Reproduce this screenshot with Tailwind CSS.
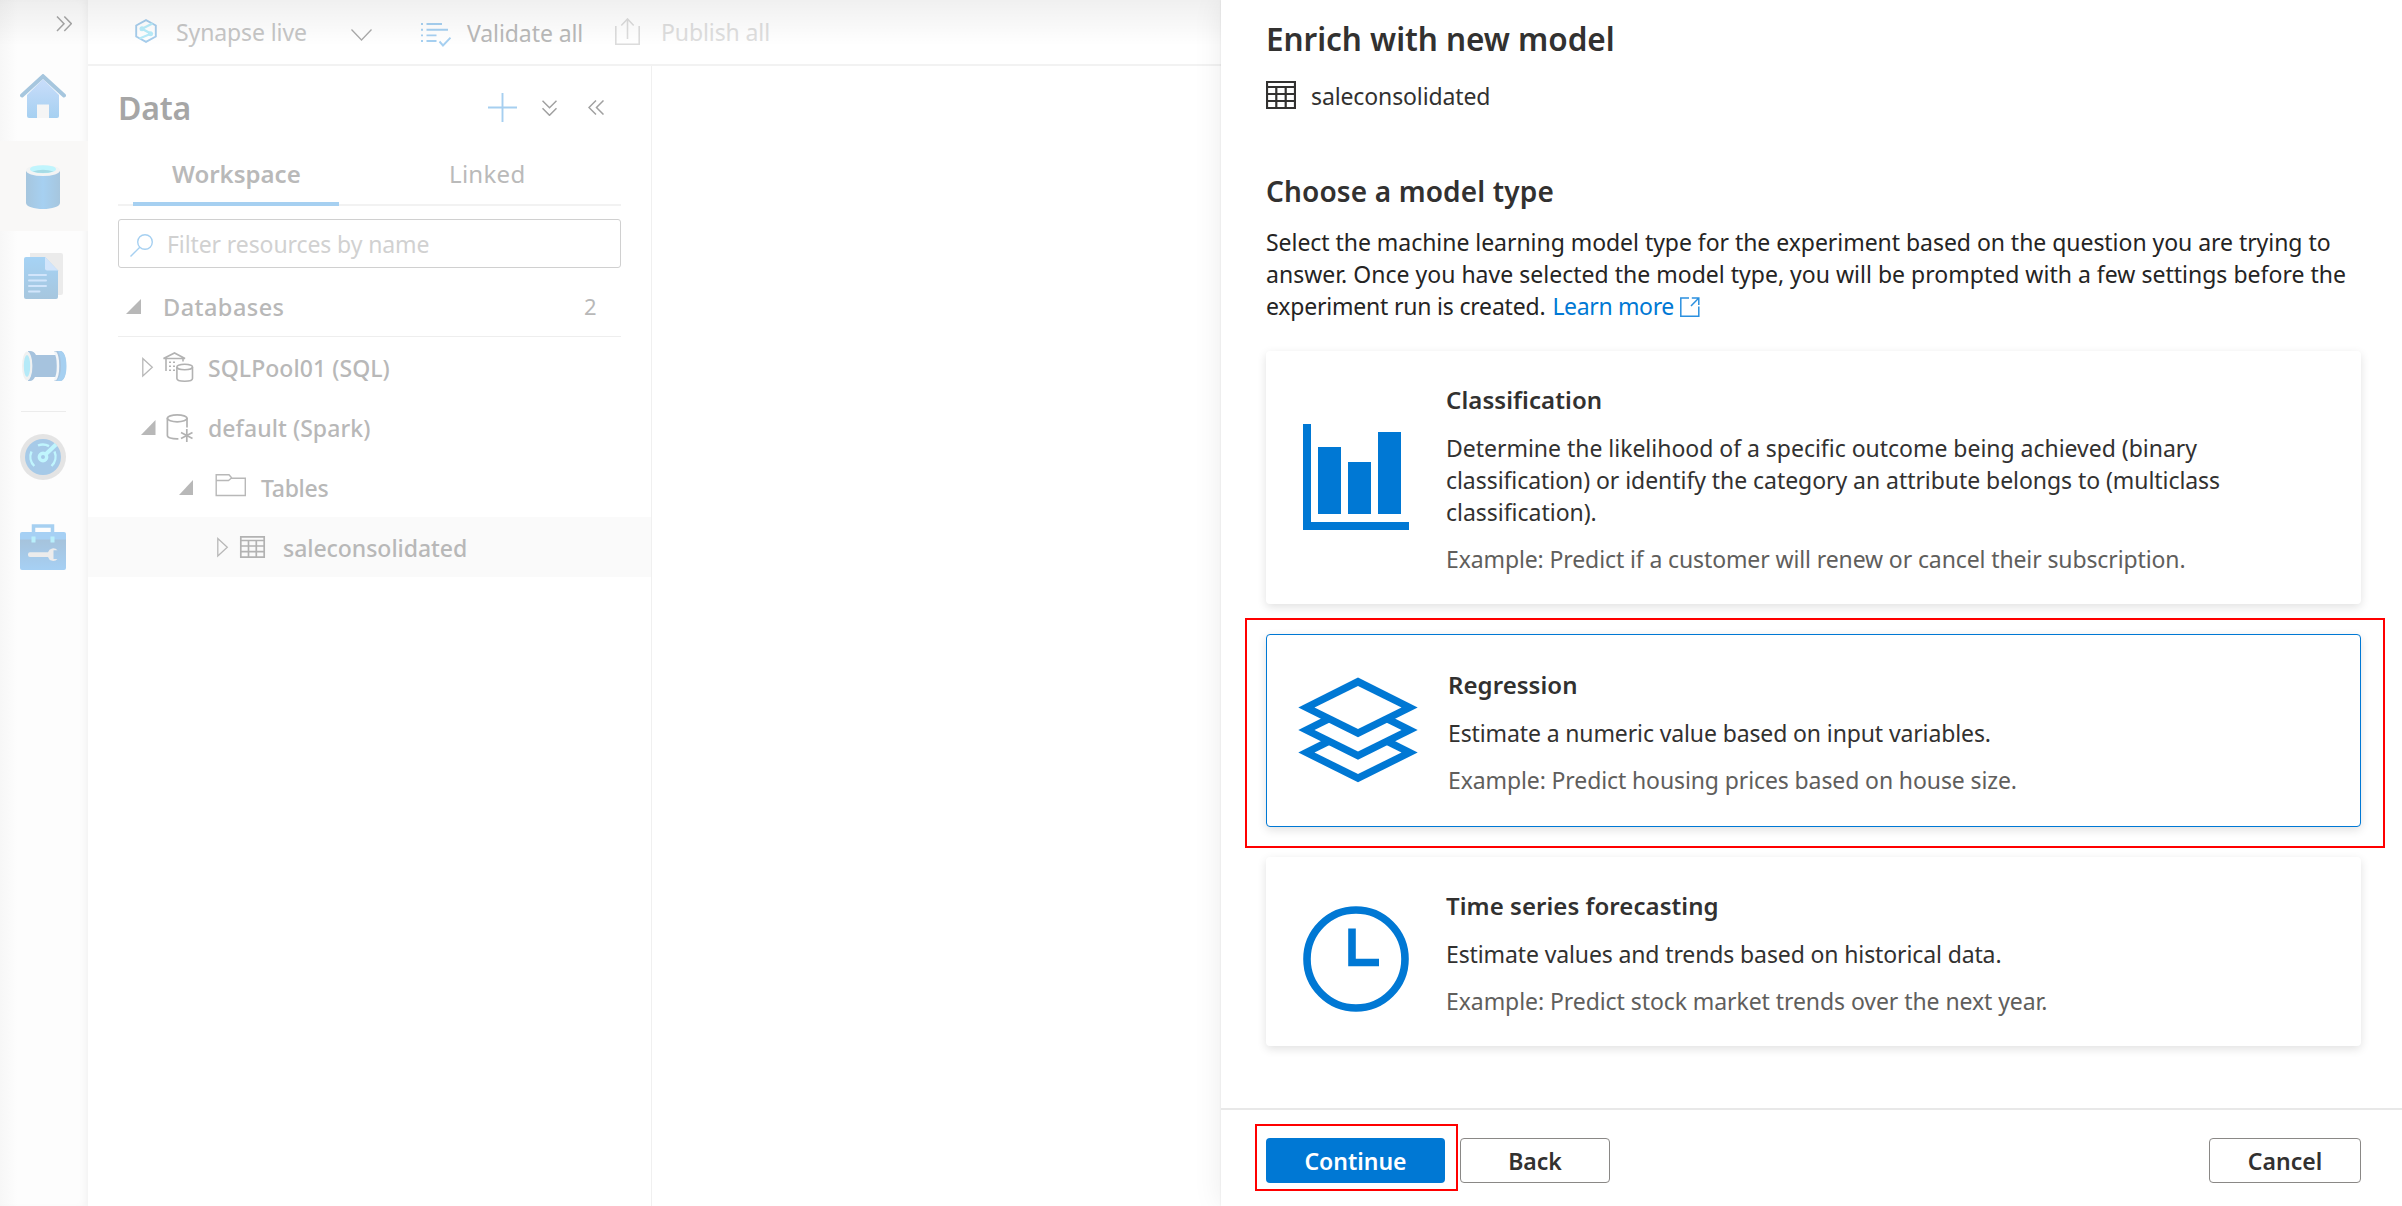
<!DOCTYPE html>
<html lang="en">
<head>
<meta charset="utf-8">
<title>Synapse Studio - Enrich with new model</title>
<script src="https://cdn.jsdelivr.net/npm/@tailwindcss/browser@4"></script>
</head>
<body class="relative flex h-[1206px] w-[2402px] overflow-hidden bg-white font-['Noto_Sans','Open_Sans',sans-serif] text-[23px] leading-8 text-[#323130]">

<!-- Navigation rail -->
<nav class="flex h-full w-[88px] shrink-0 flex-col bg-linear-to-r from-[#f7f7f7] via-[#fdfdfd] via-20% to-[#fdfdfd] shadow-[inset_-6px_0_8px_-4px_rgba(0,0,0,0.05)]">
  <div class="flex h-[51px] justify-end pt-4 pr-4">
    <svg class="h-4 w-4" viewBox="0 0 16 16" fill="none" stroke="#a6a6a6" stroke-width="1.5"><path d="M1 .5 8 7.7 1 15M8.3.5l7 7.2-7 7.3"/></svg>
  </div>
  <a class="flex h-[90px] justify-center pt-[23px] pr-0.5">
    <svg class="h-11 w-[46px]" viewBox="0 0 46 44"><defs><linearGradient id="hm" x1="0" y1="0" x2="0" y2="1"><stop offset="0" stop-color="#c9ddfa"/><stop offset="1" stop-color="#a6d0f1"/></linearGradient></defs><path d="M7 21 23 5l16 16v21q0 2-2 2H9q-2 0-2-2z" fill="url(#hm)"/><path d="M17 30.500h12V44H17z" fill="#f5f5f5"/><path d="M2 21.500 23 2.300l21 19.200" fill="none" stroke="#a6c6de" stroke-width="4" stroke-linecap="round"/></svg>
  </a>
  <a class="flex h-[90px] justify-center bg-[#f9f8f7] pt-6 pr-0.5">
    <svg class="h-11 w-[34px]" viewBox="0 0 34 44"><defs><linearGradient id="db"><stop offset="0" stop-color="#a6c6de"/><stop offset=".5" stop-color="#a6d0f1"/><stop offset="1" stop-color="#a6c6de"/></linearGradient></defs><path d="M0 6v32c0 3.500 8 6 17 6s17-2.500 17-6V6z" fill="url(#db)"/><ellipse cx="17" cy="5.500" rx="17" ry="5.500" fill="#f3f4f4"/><ellipse cx="17" cy="4.200" rx="13" ry="4" fill="#c0f5fd"/><path d="M6.500 6.500q10.500-3.500 21 0Q17 9.700 6.500 6.500z" fill="#a6dbe5"/></svg>
  </a>
  <a class="flex h-[90px] justify-center pt-[22px] pr-0.5">
    <svg class="h-[46px] w-[39px]" viewBox="0 0 39 46"><path d="M6 0h31q2 0 2 2v38q0 2-2 2H6z" fill="#ebebeb"/><defs><linearGradient id="dc" x1="0" y1="0" x2="0" y2="1"><stop offset="0" stop-color="#a6d3f5"/><stop offset="1" stop-color="#a6c6de"/></linearGradient></defs><path d="M2 4h19l13 13.500V44q0 2-2 2H2q-2 0-2-2V6q0-2 2-2z" fill="url(#dc)"/><path d="M21 4v11.500q0 2 2 2h11z" fill="#d2e5fb"/><path d="M5 22h17M5 27.500h17M5 33h17M5 38.500h10.500" stroke="#d2e5fb" stroke-width="2" stroke-linecap="round"/></svg>
  </a>
  <a class="flex h-[90px] justify-center pt-[30px]">
    <svg class="h-[30px] w-[45px]" viewBox="0 0 45 30"><path d="M6 0h2q4 0 6 4h21q-1-3-3-4h6c4 0 6 6 6 15s-2 15-6 15h-6q2-1 3-4H13q-2 4-5 4H6z" fill="#a6c3de"/><path d="M36 0h2c4.500 0 6.500 7 6.500 15S42.500 30 38 30h-3c3-4 4-9 4-15s-1-11-3-15z" fill="#a6d0f1"/><path d="M33 1c4 5 4 23 0 28" fill="none" stroke="#f2f5f8" stroke-width="2.500"/><ellipse cx="5.200" cy="15" rx="5.200" ry="14.500" fill="#f0f1f1"/><ellipse cx="5" cy="15" rx="3.200" ry="11" fill="#b5eaf8"/></svg>
  </a>
  <div class="mr-[22px] ml-[21px] h-px bg-[#ececec]"></div>
  <a class="flex h-[90px] justify-center pt-[22px] pr-0.5">
    <svg class="h-[46px] w-[46px]" viewBox="0 0 46 46"><circle cx="23" cy="23" r="23" fill="#e4e4e4"/><circle cx="23" cy="23" r="18" fill="#a6cae8"/><g fill="none" stroke="#c0f5fd" stroke-width="2.400"><path d="M18 11.500a13 13 0 0 1 11 .6M11.500 17.500a13 13 0 0 0 2.800 14.500M34.500 17.500a13 13 0 0 1-3 14.500"/><path d="M26 20 36 10.500" stroke-width="4"/><circle cx="23" cy="23" r="3.700" stroke-width="3.400"/></g></svg>
  </a>
  <a class="flex h-[90px] justify-center pt-[22px] pr-0.5">
    <svg class="h-[46px] w-[46px]" viewBox="0 0 46 46"><defs><linearGradient id="tb" x1="0" y1="0" x2="0" y2="1"><stop offset="0" stop-color="#a6c3dc"/><stop offset="1" stop-color="#a6d0f4"/></linearGradient></defs><path d="M13.500 9V2h19v7" fill="none" stroke="#a6d0f1" stroke-width="3.500"/><path d="M2 8h42q2 0 2 2v6H0v-6q0-2 2-2z" fill="#a6d0f4"/><path d="M0 15.500h46V44q0 2-2 2H2q-2 0-2-2z" fill="url(#tb)"/><path d="M11.500 12.500h4v6h-4zM30.500 12.500h4v6h-4z" fill="#b9effb"/><path d="M10 28.300h18a5.500 5.500 0 0 1 9.500-2h-4v8.700h4a5.500 5.500 0 0 1-9.500-2H10a2 2 0 0 1-2-2v-.7q0-2 2-2z" fill="#ececec"/></svg>
  </a>
</nav>

<main class="flex h-full w-[1133px] shrink-0 flex-col">
  <!-- Toolbar -->
  <header class="flex h-[66px] items-center border-b-2 border-[#f2f2f2] pl-[47px]">
    <svg class="mt-[-3px] h-6 w-[22px]" viewBox="0 0 22 24" fill="none"><path d="M11 1.200 20.800 6.500v11L11 22.800 1.200 17.500v-11z" stroke="#a6cdec" stroke-width="1.900"/><path d="M17.500 4.500 7 9.700l9 5L4.500 19.500" stroke="#b8ecfa" stroke-width="2.300"/><circle cx="7" cy="9.700" r="2.500" fill="#b8ecfa"/><circle cx="15.500" cy="14.700" r="2.500" fill="#b8ecfa"/></svg>
    <span class="ml-[19px] w-[175px] tracking-[-0.1px] text-[#c6c6c6]">Synapse live</span>
    <svg class="mt-1.5 h-3 w-[21px]" viewBox="0 0 21 12" fill="none" stroke="#aaa" stroke-width="1.300"><path d="M.5.500 10.500 11 20.500.500"/></svg>
    <svg class="mt-1 ml-[49px] h-[26px] w-[30px]" viewBox="0 0 30 26" fill="none" stroke="#a6d0f1" stroke-width="1.900"><path d="M0 3h2M0 8.700h2M0 14.400h2M0 20h2M5.500 3H21M5.500 8.700H27M5.500 14.400H15.500M5.500 20H15.500M18.500 20.500l3.500 4 7.500-7.800"/></svg>
    <span class="mt-0.5 ml-4 w-[148px] tracking-[-0.08px] text-[#b9b9b9]">Validate all</span>
    <svg class="mt-[-1px] h-[27px] w-[25px]" viewBox="0 0 25 27" fill="none" stroke="#dcdcdc" stroke-width="1.600"><path d="M.8 8v18.200h23.400V8M12.500 21V1M6.300 7.500l6.200-6.500 6.200 6.500"/></svg>
    <span class="ml-[21px] tracking-[-0.1px] text-[#dedede]">Publish all</span>
  </header>

  <!-- Data pane -->
  <section class="flex w-[564px] grow flex-col border-r border-[#f0f0f0] pt-[19px]">
    <div class="flex h-11 items-center pl-[30px]">
      <h1 class="w-[370px] pt-px text-[32px] leading-[44px] font-semibold tracking-[-0.2px] text-[#a6a6a6]">Data</h1>
      <svg class="h-[29px] w-[29px]" viewBox="0 0 29 29" fill="none" stroke="#a6cff0" stroke-width="1.900"><path d="M14.500 0v29M0 14.500h29"/></svg>
      <svg class="mt-0.5 ml-[25px] h-4 w-[15px]" viewBox="0 0 15 16" fill="none" stroke="#a0a0a0" stroke-width="1.500"><path d="m.5.800 7 7 7-7M.5 8.300l7 7 7-7"/></svg>
      <svg class="mt-px ml-[31px] h-[15px] w-4" viewBox="0 0 16 15" fill="none" stroke="#a0a0a0" stroke-width="1.500"><path d="m8 .5-7 7 7 7M15.500.500l-7 7 7 7"/></svg>
    </div>
    <div class="mx-[30px] mt-[29px] flex h-12 w-[503px] border-b-2 border-[#f2f2f2] pl-[15px] text-2xl leading-8">
      <div class="h-12 w-[206px] border-b-4 border-[#a6d0f1] pl-[39px] font-semibold text-[#b9b9b9]">Workspace</div>
      <div class="pl-[110px] tracking-[0.3px] text-[#bababa]">Linked</div>
    </div>
    <div class="mx-[30px] mt-[13px] flex h-[49px] w-[503px] items-center rounded-[3px] border border-[#d0d0d0] pl-[11px]">
      <svg class="mt-[3px] h-[23px] w-[23px]" viewBox="0 0 23 23" fill="none" stroke="#a6d0f1" stroke-width="1.400"><circle cx="15" cy="8" r="7.300"/><path d="M9.800 13.200.5 22.500"/></svg>
      <span class="ml-[14px] tracking-[-0.1px] text-[#d1d1d1]">Filter resources by name</span>
    </div>
    <div class="mx-[30px] flex h-[69px] w-[503px] border-b border-[#eee] pt-[23px] text-[#b8b8b8]">
      <svg class="mt-2 ml-2 h-[15px] w-[15px]" viewBox="0 0 15 15" fill="#b8b8b8"><path d="M15 0v15H0z"/></svg>
      <h2 class="ml-[22px] w-[421px] text-[23.500px] font-medium tracking-[0.45px]">Databases</h2>
      <span class="-mt-px text-[22px]">2</span>
    </div>
    <ul class="font-medium text-[#b8b8b8]">
      <li class="flex h-[60px] items-center">
        <svg class="h-[60px] w-[72px]" viewBox="88 337 72 60" fill="none" stroke="#b8b8b8" stroke-width="1.300"><path d="M142.800 358.500v17.500l9.500-8.700z"/></svg>
        <svg class="h-[60px] w-[48px]" viewBox="160 337 48 60" fill="none" stroke="#b2b2b2" stroke-width="1.600"><path d="m163.500 358.500 11-5.500 10.500 5.500zM166 358.500V371M183 358.500v3"/><path d="M169 362.300h2m2 0h2M169 366.300h2m2 0h2M169 370.300h2m2 0h2"/><ellipse cx="184.700" cy="367" rx="7.800" ry="2.800"/><path d="M176.900 367v11.500c0 3.600 15.600 3.600 15.600 0V367"/></svg>
        <span class="mt-px tracking-[0.06px]">SQLPool01 (SQL)</span>
      </li>
      <li class="flex h-[60px] items-center">
        <svg class="h-[60px] w-[72px]" viewBox="88 397 72 60" fill="#b8b8b8"><path d="M155.500 420v15H141z"/></svg>
        <svg class="h-[60px] w-[48px]" viewBox="160 397 48 60" fill="none" stroke="#b2b2b2" stroke-width="1.700"><ellipse cx="177.200" cy="418.300" rx="9.800" ry="3.500"/><path d="M167.400 418v17.500c0 2 4 3.500 11 3.300M187 418v9.500M186.800 429v13M181 432.500l11.500 6M192.500 432.500l-11.500 6"/></svg>
        <span class="mt-px tracking-[0.08px]">default (Spark)</span>
      </li>
      <li class="flex h-[60px] items-center">
        <svg class="h-[60px] w-[112px]" viewBox="88 457 112 60" fill="#b8b8b8"><path d="M193 480v15h-14z"/></svg>
        <svg class="h-[60px] w-[61px]" viewBox="200 457 61 60" fill="none" stroke="#b8b8b8" stroke-width="1.400"><path d="M216.200 495.500v-20.800h12.800l3 3.500h13.300v17.300zM216.200 480.500h12.300l3-2.500"/></svg>
        <span class="mt-px tracking-[-0.3px]">Tables</span>
      </li>
      <li class="flex h-[60px] items-center bg-[#fafafa]">
        <svg class="h-[60px] w-[144px]" viewBox="88 517 144 60" fill="none" stroke="#b8b8b8" stroke-width="1.300"><path d="M217.800 538.500v17.500l9.500-8.700z"/></svg>
        <svg class="h-[60px] w-[51px]" viewBox="232 517 51 60" fill="none" stroke="#b2b2b2" stroke-width="1.700"><path d="M240.800 536.800h23.400v20.400h-23.400zM240.800 540.500h23.400M240.800 546h23.400M240.800 551.600h23.400M248.500 540.500v16.700M256.300 540.500v16.700"/></svg>
        <span class="mt-px tracking-[-0.04px]">saleconsolidated</span>
      </li>
    </ul>
  </section>
</main>

<!-- Shade under the window header -->
<div class="absolute top-0 left-0 h-[46px] w-[1221px] bg-linear-to-b from-black/6 to-transparent"></div>

<!-- Enrich panel -->
<aside class="relative flex h-full w-[1181px] shrink-0 flex-col bg-white shadow-[0_0_2px_rgba(0,0,0,0.1),0_0_28px_rgba(0,0,0,0.08)]">
  <div class="flex h-[1108px] flex-col pt-[17px] pl-[45px]">
    <h1 class="text-[31.500px] leading-[44px] font-semibold tracking-[-0.04px]">Enrich with new model</h1>
    <div class="mt-[19px] flex h-8">
      <svg class="mt-px h-7 w-[30px]" viewBox="0 0 30 28" fill="none" stroke="#323130" stroke-width="2.200"><path d="M1 1h28v26H1zM1 6h28M1 13h28M1 20h28M10.300 6v21M19.700 6v21"/></svg>
      <span class="ml-[15px] tracking-[-0.12px]">saleconsolidated</span>
    </div>
    <h2 class="mt-[59px] text-[28px] leading-10 font-semibold tracking-[0.14px]">Choose a model type</h2>
    <p class="mt-[15px] whitespace-nowrap text-[#252423]">
      <span class="block tracking-[-0.042px]">Select the machine learning model type for the experiment based on the question you are trying to</span>
      <span class="block tracking-[0.014px]">answer. Once you have selected the model type, you will be prompted with a few settings before the</span>
      <span class="flex tracking-[-0.2px]">experiment run is created.<a class="ml-[7px] tracking-[-0.35px] text-[#0078d4]">Learn more</a>
        <svg class="mt-[7px] ml-[6px] h-5 w-5" viewBox="0 0 20 20" fill="none" stroke="#2b90df" stroke-width="1.500"><path d="M9 1H.8v18.200h18V9.500M11.800 1h7v7M18.800 1 11 9"/></svg></span>
    </p>

    <div class="mt-[29px] flex w-[1095px] flex-col gap-[30px]">
      <article class="flex h-[253px] rounded-[4px] bg-white pl-[37px] shadow-[0_3px_10px_rgba(0,0,0,0.12)]">
        <svg class="mt-[73px] h-[106px] w-[106px]" viewBox="0 0 106 106" fill="#0078d4"><path d="M0 0h8v98h98v8H0zM15 23h23v67H15zM45 38h23v52H45zM75 8h23v82H75z"/></svg>
        <div class="ml-[37px] pt-[33px]">
          <h3 class="text-2xl leading-8 font-semibold tracking-[0.08px]">Classification</h3>
          <p class="mt-4 whitespace-nowrap tracking-[-0.02px]">Determine the likelihood of a specific outcome being achieved (binary<br><span class="tracking-[-0.055px]">classification) or identify the category an attribute belongs to (multiclass</span><br>classification).</p>
          <p class="mt-[15px] tracking-[-0.115px] text-[#605e5c]">Example: Predict if a customer will renew or cancel their subscription.</p>
        </div>
      </article>

      <article class="flex h-[193px] rounded-[4px] border border-[#0078d4] bg-white pl-[31px] shadow-[0_3px_10px_rgba(0,0,0,0.12)]">
        <svg class="mt-[42px] h-[106px] w-[120px]" viewBox="0 0 120 106"><g fill="#0078d4"><path d="m60 45.500 59.700 30L60 105.300.300 75.500z"/><path fill="#fff" d="m60 54 43.500 21.500L60 97 16.500 75.500z"/><path d="m60 23 59.700 30L60 82.800.300 53z"/><path fill="#fff" d="m60 31.500 43.500 21.500L60 74.500 16.500 53z"/><path d="m60 .500 59.700 30L60 60.300.300 30.500z"/><path fill="#fff" d="m60 9 43.500 21.500L60 52 16.500 30.500z"/></g></svg>
        <div class="ml-[30px] pt-[34px]">
          <h3 class="text-2xl leading-8 font-semibold tracking-[0.05px]">Regression</h3>
          <p class="mt-4 tracking-[-0.12px]">Estimate a numeric value based on input variables.</p>
          <p class="mt-[15px] tracking-[-0.11px] text-[#605e5c]">Example: Predict housing prices based on house size.</p>
        </div>
      </article>

      <article class="flex h-[189px] rounded-[4px] bg-white pl-[37px] shadow-[0_3px_10px_rgba(0,0,0,0.12)]">
        <svg class="mt-[49px] h-[106px] w-[106px]" viewBox="0 0 106 106" fill="none" stroke="#0078d4" stroke-width="7.600"><circle cx="53" cy="53" r="49"/><path d="M49 22.500v34h27"/></svg>
        <div class="ml-[37px] pt-[33px]">
          <h3 class="text-2xl leading-8 font-semibold tracking-[0.05px]">Time series forecasting</h3>
          <p class="mt-4 tracking-[-0.12px]">Estimate values and trends based on historical data.</p>
          <p class="mt-[15px] tracking-[-0.07px] text-[#605e5c]">Example: Predict stock market trends over the next year.</p>
        </div>
      </article>
    </div>
  </div>

  <footer class="flex h-[98px] border-t-2 border-[#e8e8e8] pt-7 pl-[45px] font-semibold">
    <button class="h-[45px] w-[179px] rounded-[4px] bg-[#0078d4] pt-px leading-8 text-white">Continue</button>
    <button class="ml-[15px] h-[45px] w-[150px] rounded-[4px] border border-[#8a8886] pt-px leading-8">Back</button>
    <button class="ml-[599px] h-[45px] w-[152px] rounded-[4px] border border-[#8a8886] pt-px leading-8">Cancel</button>
  </footer>
</aside>

<!-- Callout frames -->
<div class="absolute top-[618px] left-[1245px] h-[230px] w-[1140px] border-2 border-[#f00]"></div>
<div class="absolute top-[1124px] left-[1255px] h-[67px] w-[203px] border-2 border-[#f00]"></div>
</body>
</html>
